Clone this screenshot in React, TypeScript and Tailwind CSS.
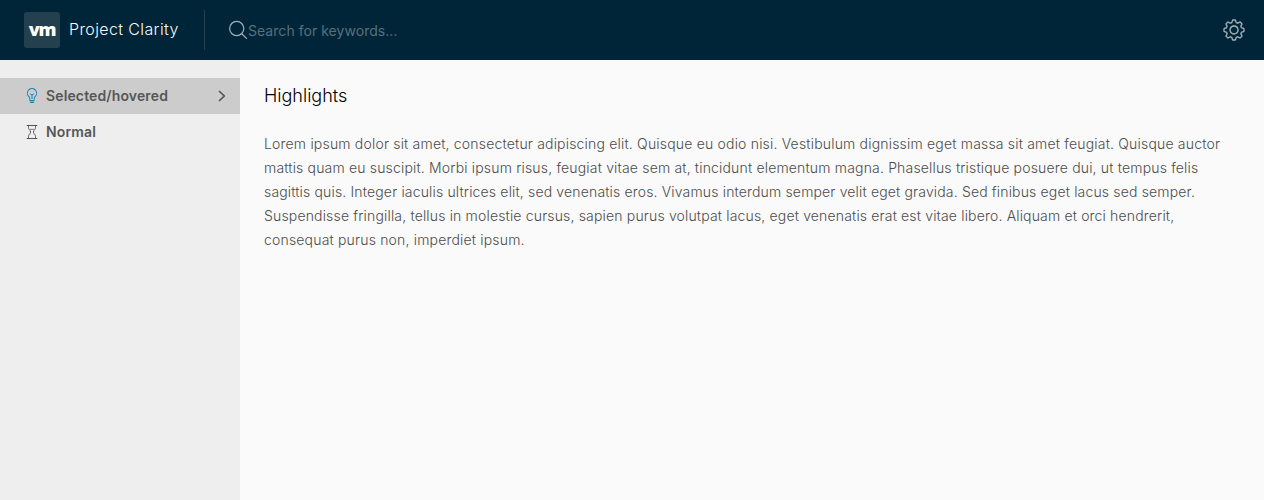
import React from "react";

function SearchIcon() {
  return (
    <svg className="h-5 w-5 shrink-0" viewBox="0 0 20 20" fill="none" stroke="currentColor" strokeWidth="1.2">
      <circle cx="7.7" cy="8.5" r="7.1" />
      <path d="M12.7 13.7 17.6 18.4" strokeLinecap="round" />
    </svg>
  );
}

function CogIcon() {
  return (
    <svg className="h-6 w-6" viewBox="0 0 36 36" fill="currentColor">
      <path d="M18.1,11c-3.9,0-7,3.1-7,7s3.1,7,7,7c3.9,0,7-3.1,7-7S22,11,18.1,11z M18.1,23c-2.8,0-5-2.2-5-5s2.2-5,5-5c2.8,0,5,2.2,5,5S20.9,23,18.1,23z" />
      <path d="M32.8,14.7L30,13.8l-0.6-1.5l1.4-2.6c0.3-0.6,0.2-1.4-0.3-1.9l-2.4-2.4c-0.5-0.5-1.3-0.6-1.9-0.3l-2.6,1.4l-1.5-0.6l-0.9-2.8C21,2.5,20.4,2,19.7,2h-3.4c-0.7,0-1.3,0.5-1.4,1.2L14,6c-0.6,0.1-1.1,0.3-1.6,0.6L9.8,5.2C9.2,4.9,8.4,5,7.9,5.5L5.5,7.9C5,8.4,4.9,9.2,5.2,9.8l1.3,2.5c-0.2,0.5-0.4,1.1-0.6,1.6l-2.8,0.9C2.5,15,2,15.6,2,16.3v3.4c0,0.7,0.5,1.3,1.2,1.5L6,22.1l0.6,1.5l-1.4,2.6c-0.3,0.6-0.2,1.4,0.3,1.9l2.4,2.4c0.5,0.5,1.3,0.6,1.9,0.3l2.6-1.4l1.5,0.6l0.9,2.9c0.2,0.6,0.8,1.1,1.5,1.1h3.4c0.7,0,1.3-0.5,1.5-1.1l0.9-2.9l1.5-0.6l2.6,1.4c0.6,0.3,1.4,0.2,1.9-0.3l2.4-2.4c0.5-0.5,0.6-1.3,0.3-1.9l-1.4-2.6l0.6-1.5l2.9-0.9c0.6-0.2,1.1-0.8,1.1-1.5v-3.4C34,15.6,33.5,14.9,32.8,14.7z M32,19.4l-3.6,1.1L28.3,21c-0.3,0.7-0.6,1.4-0.9,2.1l-0.3,0.5l1.8,3.3l-2,2l-3.3-1.8l-0.5,0.3c-0.7,0.4-1.4,0.7-2.1,0.9l-0.5,0.1L19.4,32h-2.8l-1.1-3.6L15,28.3c-0.7-0.3-1.4-0.6-2.1-0.9l-0.5-0.3l-3.3,1.8l-2-2l1.8-3.3l-0.3-0.5c-0.4-0.7-0.7-1.4-0.9-2.1l-0.1-0.5L4,19.4v-2.8l3.4-1l0.2-0.5c0.2-0.8,0.5-1.5,0.9-2.2l0.3-0.5L7.1,9.1l2-2l3.2,1.8l0.5-0.3c0.7-0.4,1.4-0.7,2.2-0.9l0.5-0.2L16.6,4h2.8l1.1,3.5L21,7.7c0.7,0.2,1.4,0.5,2.1,0.9l0.5,0.3l3.3-1.8l2,2l-1.8,3.3l0.3,0.5c0.4,0.7,0.7,1.4,0.9,2.1l0.1,0.5l3.6,1.1V19.4z" />
    </svg>
  );
}

function BulbIcon() {
  return (
    <svg className="h-4 w-4 shrink-0 text-[#1a84bd]" viewBox="0 0 36 36" fill="none" stroke="currentColor" strokeWidth="2.4" strokeLinecap="round">
      <path d="M13 25.500v-2c0-2-1-3-2.300-4.500A10.300 10.300 0 1 1 25.300 19C24 20.500 23 21.500 23 23.500v2" />
      <path d="M13.500 28.500h9M15 32.500h6" strokeWidth="3" />
      <path d="M18 24V15M14.500 13.500 18 16l3.500-2.500" strokeWidth="2.200" />
    </svg>
  );
}

function HourglassIcon() {
  return (
    <svg className="h-4 w-4 shrink-0" viewBox="0 0 36 36" fill="none" stroke="currentColor" strokeWidth="2" strokeLinecap="round">
      <path d="M7 3.300h22M7 32.700h22" strokeWidth="2.400" />
      <path d="M10 3v5c0 4 5 7 5 10s-5 6-5 10v5M26 3v5c0 4-5 7-5 10s5 6 5 10v5" />
      <path d="M14.500 12h7" strokeWidth="1.600" />
    </svg>
  );
}

export default function App() {
  return (
    <div className="flex h-[500px] w-full flex-col overflow-hidden bg-[#fafafa] font-['Inter',sans-serif] text-[#565656]">
      <header className="flex h-[60px] shrink-0 items-center bg-[#002538] text-[#fafafa]">
        <div className="ml-6 flex h-9 w-9 items-center justify-center rounded-[3px] bg-[#24404f]">
          <span className="-mt-[3px] font-['Open_Sans',sans-serif] text-[18px] leading-5 font-extrabold tracking-[-1.2px] text-white">vm</span>
        </div>
        <span className="-mt-0.5 ml-[9px] w-[135px] text-base leading-6 font-[350] tracking-[0.38px] whitespace-nowrap">Project Clarity</span>
        <div className="h-10 w-px bg-[#24404f]" />
        <label className="ml-6 flex items-center text-[#a3b0b7]">
          <SearchIcon />
          <span className="-ml-px pt-0.5 text-sm leading-6 tracking-[0.04px] whitespace-nowrap text-[#58707c]">Search for keywords...</span>
        </label>
        <button className="mr-[18px] ml-auto text-[#a3b0b7]" aria-label="Settings">
          <CogIcon />
        </button>
      </header>
      <div className="flex grow">
        <nav className="w-60 shrink-0 bg-[#eeeeee] pt-[18px] text-sm font-semibold tracking-[0.13px]">
          <a className="flex h-9 items-center bg-[#cccccc] pr-3 pl-6">
            <BulbIcon />
            <span className="ml-1.5 whitespace-nowrap">Selected/hovered</span>
            <svg className="ml-auto h-3 w-3" viewBox="0 0 12 12" fill="none" stroke="currentColor" strokeWidth="1.700">
              <path d="M3 1 8.300 6 3 11" />
            </svg>
          </a>
          <a className="flex h-9 items-center pl-6">
            <HourglassIcon />
            <span className="ml-1.5">Normal</span>
          </a>
        </nav>
        <main className="pt-6 pl-6">
          <h1 className="text-lg leading-6 font-light text-black">Highlights</h1>
          <p className="mt-6 text-sm leading-6 font-[350] whitespace-nowrap text-[#4c4c4c]">
            <span className="block tracking-[0.188px]">Lorem ipsum dolor sit amet, consectetur adipiscing elit. Quisque eu odio nisi. Vestibulum dignissim eget massa sit amet feugiat. Quisque auctor</span>
            <span className="block tracking-[0.173px]">mattis quam eu suscipit. Morbi ipsum risus, feugiat vitae sem at, tincidunt elementum magna. Phasellus tristique posuere dui, ut tempus felis</span>
            <span className="block tracking-[0.16px]">sagittis quis. Integer iaculis ultrices elit, sed venenatis eros. Vivamus interdum semper velit eget gravida. Sed finibus eget lacus sed semper.</span>
            <span className="block tracking-[0.165px]">Suspendisse fringilla, tellus in molestie cursus, sapien purus volutpat lacus, eget venenatis erat est vitae libero. Aliquam et orci hendrerit,</span>
            <span className="block tracking-[0.18px]">consequat purus non, imperdiet ipsum.</span>
          </p>
        </main>
      </div>
    </div>
  );
}
